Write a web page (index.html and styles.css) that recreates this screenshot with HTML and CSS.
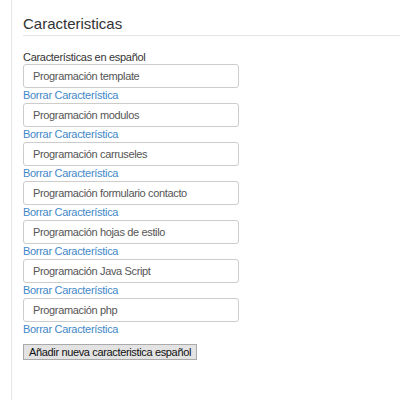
FILE: index.html
```html
<!DOCTYPE html>
<html lang="es">
<head>
<meta charset="utf-8">
<link rel="stylesheet" href="styles.css">
</head>
<body>
<div class="page">
  <div class="content">
    <h2 class="title">Caracteristicas</h2>
    <div class="field">
      <label class="label">Características en español</label>
      <div class="item">
        <div class="input">Programación template</div>
        <a class="link" href="#">Borrar Característica</a>
      </div>
      <div class="item">
        <div class="input">Programación modulos</div>
        <a class="link" href="#">Borrar Característica</a>
      </div>
      <div class="item">
        <div class="input">Programación carruseles</div>
        <a class="link" href="#">Borrar Característica</a>
      </div>
      <div class="item">
        <div class="input">Programación formulario contacto</div>
        <a class="link" href="#">Borrar Característica</a>
      </div>
      <div class="item">
        <div class="input">Programación hojas de estilo</div>
        <a class="link" href="#">Borrar Característica</a>
      </div>
      <div class="item">
        <div class="input">Programación Java Script</div>
        <a class="link" href="#">Borrar Característica</a>
      </div>
      <div class="item">
        <div class="input">Programación php</div>
        <a class="link" href="#">Borrar Característica</a>
      </div>
      <button class="btn" type="button">Añadir nueva caracteristica español</button>
    </div>
  </div>
</div>
</body>
</html>
```
FILE: styles.css
```css
html, body {
  margin: 0;
  padding: 0;
  background: #fff;
}
body {
  font-family: "Liberation Sans", Arial, sans-serif;
  color: #333;
}
.page {
  width: 400px;
  height: 400px;
  display: flex;
}
.content {
  flex: 1;
  margin-left: 11px;
  border-left: 1px solid #e6e6e6;
  padding-left: 11px;
  padding-top: 15px;
}
.title {
  margin: 0;
  font-size: 15px;
  font-weight: normal;
  line-height: 17px;
  color: #333;
  padding-bottom: 3px;
  border-bottom: 1px solid #e5e5e5;
}
.field {
  padding-top: 14px;
  display: flex;
  flex-direction: column;
  align-items: flex-start;
}
.label {
  font-size: 11px;
  line-height: 14px;
  letter-spacing: -0.3px;
  color: #333;
}
.item {
  display: flex;
  flex-direction: column;
  align-items: flex-start;
}
.input {
  box-sizing: border-box;
  width: 216px;
  height: 24px;
  border: 1px solid #ccc;
  border-radius: 3px;
  padding: 0 9px;
  font-size: 11px;
  letter-spacing: -0.35px;
  line-height: 22px;
  color: #555;
}
.link {
  font-size: 11px;
  letter-spacing: -0.3px;
  line-height: 15px;
  color: #3f88c8;
  text-decoration: none;
}
.btn {
  margin-top: 7px;
  box-sizing: border-box;
  height: 16px;
  font-family: "Liberation Sans", Arial, sans-serif;
  font-size: 11px;
  letter-spacing: -0.35px;
  line-height: 13px;
  padding: 0 5px;
  background: #e3e3e3;
  border: 1px solid #aaa;
  border-radius: 0;
  color: #111;
}
```
